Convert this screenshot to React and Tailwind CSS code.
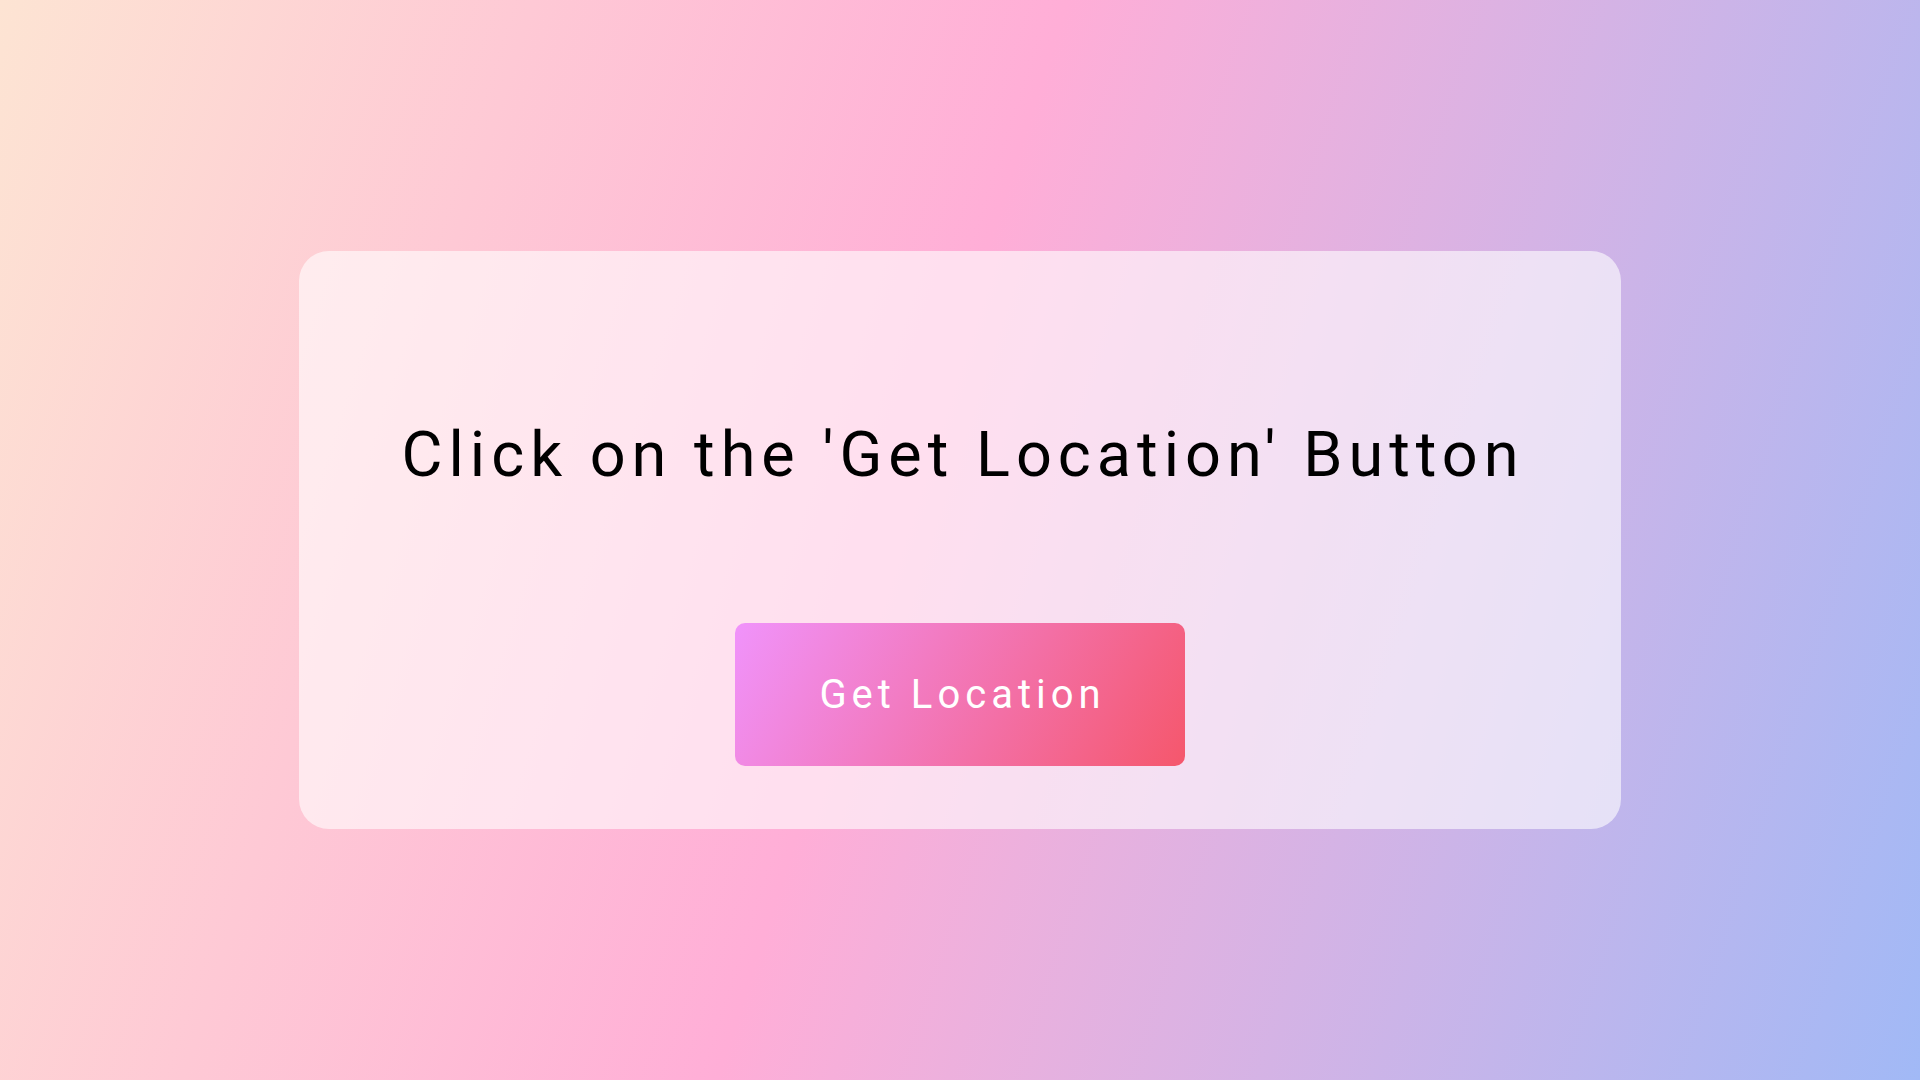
import React from 'react';

export default function App() {
  return (
    <div className="min-h-screen w-full flex items-center justify-center bg-[linear-gradient(108deg,#fde4d3_0%,#ffaed7_47%,#a1b9f6_100%)] font-['Roboto',sans-serif]">
      {/* Card */}
      <div className="w-[1322px] rounded-[30px] bg-white/60 flex flex-col items-center pt-[172px] pb-[63px]">
        <h1 className="text-[63px] leading-none font-normal text-black tracking-[6px] pl-[6px]">
          Click on the 'Get Location' Button
        </h1>
        <button className="mt-[137px] w-[450px] h-[143px] rounded-[10px] bg-[linear-gradient(120deg,#f093fb_0%,#f5576c_100%)] text-white text-[40px] tracking-[5px] pl-[5px]">
          Get Location
        </button>
      </div>
    </div>
  );
}
